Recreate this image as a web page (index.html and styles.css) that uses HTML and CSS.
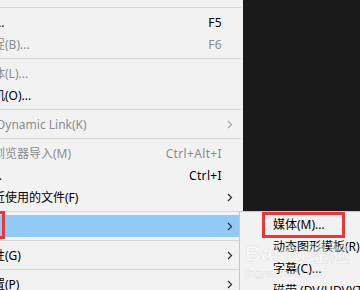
FILE: index.html
```
<!DOCTYPE html>
<html lang="zh-CN">
<head>
<meta charset="utf-8">
<link rel="stylesheet" href="styles.css">
</head>
<body>
<div class="screen">
  <div class="menu">
    <div class="item"><span class="label">另存为副本(Y)...</span><span class="key"></span><span class="sub"></span></div>
    <div class="sep"></div>
    <div class="item"><span class="label">捕捉(T)...</span><span class="key">F5</span><span class="sub"></span></div>
    <div class="item off"><span class="label">批量捕捉(B)...</span><span class="key">F6</span><span class="sub"></span></div>
    <div class="sep"></div>
    <div class="item off"><span class="label">链接媒体(L)...</span><span class="key"></span><span class="sub"></span></div>
    <div class="item"><span class="label">设为脱机(O)...</span><span class="key"></span><span class="sub"></span></div>
    <div class="sep"></div>
    <div class="item off"><span class="label">Adobe Dynamic Link(K)</span><span class="key"></span><span class="sub"><svg class="chev" viewBox="0 0 6 9" width="6" height="9"><path d="M1 1l3.5 3.5L1 8"/></svg></span></div>
    <div class="sep"></div>
    <div class="item off"><span class="label">从媒体浏览器导入(M)</span><span class="key">Ctrl+Alt+I</span><span class="sub"></span></div>
    <div class="item"><span class="label">导入(I)...</span><span class="key">Ctrl+I</span><span class="sub"></span></div>
    <div class="item"><span class="label">导入最近使用的文件(F)</span><span class="key"></span><span class="sub"><svg class="chev" viewBox="0 0 6 9" width="6" height="9"><path d="M1 1l3.5 3.5L1 8"/></svg></span></div>
    <div class="sep"></div>
    <div class="item hot"><span class="label">导出(E)</span><span class="key"></span><span class="sub"><svg class="chev" viewBox="0 0 6 9" width="6" height="9"><path d="M1 1l3.5 3.5L1 8"/></svg></span></div>
    <div class="sep"></div>
    <div class="item"><span class="label">获取属性(G)</span><span class="key"></span><span class="sub"><svg class="chev" viewBox="0 0 6 9" width="6" height="9"><path d="M1 1l3.5 3.5L1 8"/></svg></span></div>
    <div class="sep"></div>
    <div class="item"><span class="label">项目设置(P)</span><span class="key"></span><span class="sub"><svg class="chev" viewBox="0 0 6 9" width="6" height="9"><path d="M1 1l3.5 3.5L1 8"/></svg></span></div>
  </div>
  <div class="dark"></div>

  <div class="submenu">
    <div class="subitem">媒体(M)...</div>
    <div class="subitem">动态图形模板(R)...</div>
    <div class="subitem">字幕(C)...</div>
    <div class="subitem">磁带 (DV/HDV)(T)...</div>
  </div>

  <div class="watermark">
    <span class="wm-big">Baidu经验</span>
    <span class="wm-small">jingyan.baidu.com</span>
  </div>

  <div class="mark mark-left"></div>
  <div class="mark mark-sub"></div>
</div>
</body>
</html>
```

FILE: styles.css
```
* { box-sizing: border-box; }
html, body { margin: 0; padding: 0; }
body {
  background: #1a1a1a;
  font-family: "Noto Sans", "Noto Sans CJK SC", sans-serif;
  font-size: 12px;
  color: #000;
}
.screen {
  position: relative;
  display: flex;
  width: 360px;
  height: 290px;
  overflow: hidden;
}
.menu {
  flex: 0 0 303px;
  margin-left: -60px;
  margin-top: -18px;
  background: #f2f2f2;
  align-self: flex-start;
  padding-bottom: 40px;
}
.dark { flex: 1; background: #1a1a1a; }
.item {
  display: flex;
  align-items: center;
  height: 22px;
  padding-left: 17px;
  margin-right: 2px;
  white-space: nowrap;
}
.item .label { flex: 1; }
.item .key { text-align: right; letter-spacing: 0.35px; }
.item .sub {
  flex: 0 0 19px;
  display: flex;
  align-items: center;
  height: 22px;
  padding-left: 5px;
}
.chev { display: block; fill: none; stroke: #2b2b2b; stroke-width: 1.2; }
.item.off { color: #8c8c8c; }
.item.off .chev { stroke: #a6a6a6; }
.item.hot { background: #91c9f7; }
.sep {
  height: 7px;
  padding: 3px 0;
  margin-right: 2px;
}
.sep::before {
  content: "";
  display: block;
  height: 1px;
  background: #d7d7d7;
}
.submenu {
  position: absolute;
  left: 239px;
  top: 211px;
  width: 150px;
  height: 100px;
  background: #f2f2f2;
  border: 1px solid #c8c8c8;
  padding-top: 2px;
}
.subitem {
  height: 22px;
  line-height: 22px;
  padding-left: 33px;
  white-space: nowrap;
}
.watermark {
  position: absolute;
  left: 245px;
  top: 243px;
  display: flex;
  flex-direction: column;
  line-height: 1;
  white-space: nowrap;
  pointer-events: none;
}
.wm-big {
  font-family: "Liberation Sans", "Noto Sans CJK SC", sans-serif;
  font-weight: bold;
  font-size: 22px;
  color: rgba(255,255,255,0.45);
  -webkit-text-stroke: 0.5px rgba(180,180,180,0.35);
}
.wm-small {
  font-family: "Liberation Sans", sans-serif;
  font-size: 10px;
  margin-top: 4px;
  color: rgba(255,255,255,0.4);
  -webkit-text-stroke: 0.3px rgba(180,180,180,0.35);
}
.mark {
  position: absolute;
  border: 3px solid #ef3434;
}
.mark-left { left: -100px; top: 211px; width: 105px; height: 28px; }
.mark-sub { left: 262px; top: 212px; width: 83px; height: 26px; }
```
